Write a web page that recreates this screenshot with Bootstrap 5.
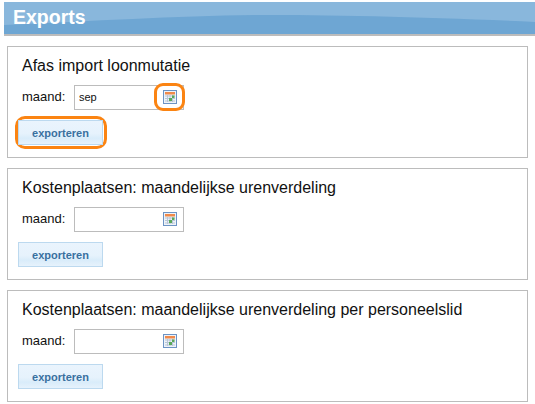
<!DOCTYPE html>
<html lang="nl">
<head>
<meta charset="UTF-8"/>
<title>Exports</title>
<link href="https://cdn.jsdelivr.net/npm/bootstrap@5.3.3/dist/css/bootstrap.min.css" rel="stylesheet"/>
<style>
  body{background:#fff;color:#111;font-family:"Liberation Sans",Arial,sans-serif;font-size:13px;overflow:hidden}
  .page-wrap{padding:2px 7px 0 7px}
  .page-head{position:relative;margin:0 -7px 10px -3px;height:34px;background:#6ea6d3;border-bottom:2px solid #bcbcbc;overflow:hidden}
  .page-head svg{position:absolute;left:0;top:0}
  .page-head h1{position:relative;margin:0;padding:5px 0 0 9px;font-size:19.5px;line-height:20px;font-weight:700;color:#fff;font-family:"Liberation Sans",Arial,sans-serif}
  .export-box{height:112px;border:1px solid #bcbcbc;margin-bottom:10px;padding:9px 10px 0 10px;background:#fff}
  .export-box h2{margin:0 0 9px 4px;font-size:16px;line-height:20px;font-weight:400;color:#111;font-family:"Liberation Sans",Arial,sans-serif}
  .month-row{margin-left:4px;height:25px}
  .month-row label{width:52px;font-size:13px;padding-bottom:2px}
  .month-field{position:relative;width:110px;height:25px;border:1px solid #bcbcbc;background:#fff}
  .month-field input{width:100%;height:100%;border:0;outline:0;padding:0 28px 1px 4px;font-size:11px;font-family:"Liberation Sans",Arial,sans-serif;color:#111;background:transparent}
  .cal-btn{position:absolute;left:88px;top:4px;width:14px;height:14px;display:block}
  .cal-hl{position:absolute;left:79px;top:-3px;width:31px;height:28px;border:3px solid #fb8412;border-radius:9px}
  .export-btn{display:block;margin-top:10px;width:85px;height:25px;padding:1px 0 0;border:1px solid #bcd9ef;border-radius:0;background:linear-gradient(#eaf4fd 0,#e6f2fc 55%,#d9ecfa 75%,#e6f2fc 100%);color:#39709f;font-size:11px;font-weight:700;font-family:"Liberation Sans",Arial,sans-serif;line-height:21px;text-align:center}
  .btn-wrap{display:inline-block;position:relative}
  .btn-hl{position:absolute;left:-3px;top:6px;width:92px;height:33px;border:3px solid #fb8412;border-radius:10px}
</style>
</head>
<body>
<div class="page-wrap">
  <div class="page-head">
    <svg width="531" height="34" viewBox="0 0 531 34" aria-hidden="true">
      <path d="M0 0H531V20C430 15 330 13 250 13C170 14 90 19 0 23Z" fill="#89b7dc"/>
    </svg>
    <h1>Exports</h1>
  </div>

  <div class="export-box">
    <h2>Afas import loonmutatie</h2>
    <div class="month-row d-flex align-items-center">
      <label>maand:</label>
      <div class="month-field">
        <input type="text" value="sep"/>
        <svg class="cal-btn" viewBox="0 0 14 14" aria-hidden="true"><rect x=".5" y=".5" width="13" height="13" fill="#eef3f9" stroke="#6c93c4"/><rect x="2" y="2" width="10" height="2.5" fill="#f08a4b"/><path d="M2 6h10M2 8.5h10M2 11h10M4.5 5v7M7 5v7M9.5 5v7" stroke="#b9c6d6" stroke-width="1"/><rect x="6" y="8" width="3" height="3" fill="#5aa85a"/><rect x="9" y="5.5" width="2.5" height="2.5" fill="#5aa85a"/></svg>
        <span class="cal-hl"></span>
      </div>
    </div>
    <div class="btn-wrap"><span class="btn-hl"></span><button type="button" class="btn export-btn position-relative">exporteren</button></div>
  </div>

  <div class="export-box">
    <h2>Kostenplaatsen: maandelijkse urenverdeling</h2>
    <div class="month-row d-flex align-items-center">
      <label>maand:</label>
      <div class="month-field">
        <input type="text"/>
        <svg class="cal-btn" viewBox="0 0 14 14" aria-hidden="true"><rect x=".5" y=".5" width="13" height="13" fill="#eef3f9" stroke="#6c93c4"/><rect x="2" y="2" width="10" height="2.5" fill="#f08a4b"/><path d="M2 6h10M2 8.5h10M2 11h10M4.5 5v7M7 5v7M9.5 5v7" stroke="#b9c6d6" stroke-width="1"/><rect x="6" y="8" width="3" height="3" fill="#5aa85a"/><rect x="9" y="5.5" width="2.5" height="2.5" fill="#5aa85a"/></svg>
      </div>
    </div>
    <button type="button" class="btn export-btn">exporteren</button>
  </div>

  <div class="export-box">
    <h2>Kostenplaatsen: maandelijkse urenverdeling per personeelslid</h2>
    <div class="month-row d-flex align-items-center">
      <label>maand:</label>
      <div class="month-field">
        <input type="text"/>
        <svg class="cal-btn" viewBox="0 0 14 14" aria-hidden="true"><rect x=".5" y=".5" width="13" height="13" fill="#eef3f9" stroke="#6c93c4"/><rect x="2" y="2" width="10" height="2.5" fill="#f08a4b"/><path d="M2 6h10M2 8.5h10M2 11h10M4.5 5v7M7 5v7M9.5 5v7" stroke="#b9c6d6" stroke-width="1"/><rect x="6" y="8" width="3" height="3" fill="#5aa85a"/><rect x="9" y="5.5" width="2.5" height="2.5" fill="#5aa85a"/></svg>
      </div>
    </div>
    <button type="button" class="btn export-btn">exporteren</button>
  </div>
</div>
<script src="https://cdn.jsdelivr.net/npm/bootstrap@5.3.3/dist/js/bootstrap.bundle.min.js"></script>
</body>
</html>
